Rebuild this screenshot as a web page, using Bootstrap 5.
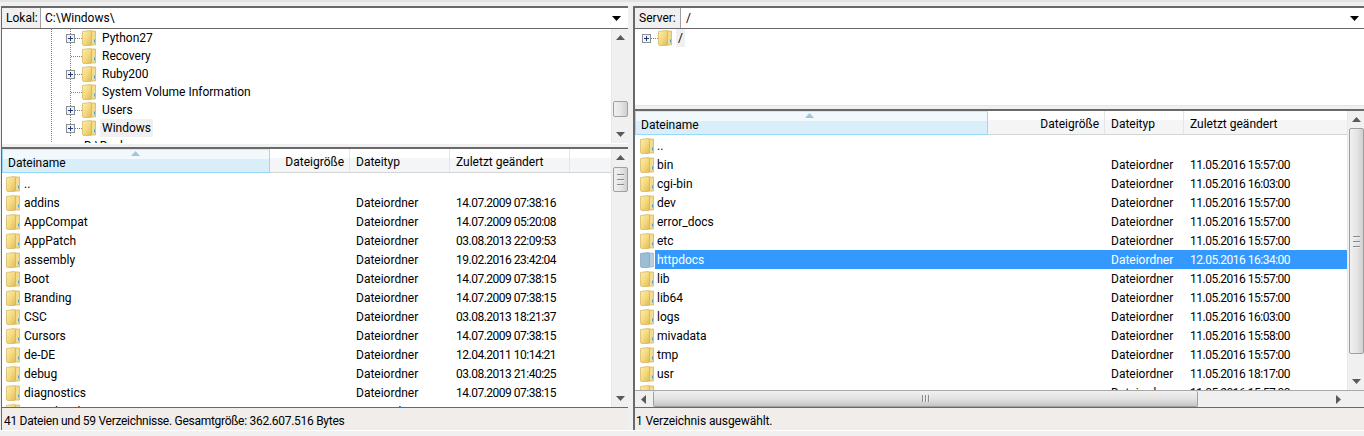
<!DOCTYPE html>
<html lang="de">
<head>
<meta charset="utf-8">
<title>FileZilla</title>
<link href="https://cdn.jsdelivr.net/npm/bootstrap@5.3.0/dist/css/bootstrap.min.css" rel="stylesheet">
<style>
html,body{height:436px;overflow:hidden;margin:0}
body{background:#f0f0f0;font:12px/19px Roboto,"Noto Sans",sans-serif;color:#000;border-top:2px solid #e2e2e2}
.defs-hold{width:0;height:0;overflow:hidden;display:block}
.shell{padding-top:4px;height:429px;border-bottom:1px solid #fff}
.pane-l{width:627px;margin-left:1px;flex:none;border-left:1px solid #696969}
.pane-r{flex:1 1 auto;min-width:0;margin-left:5px;border-left:2px solid #696969}
.addr{border-top:2px solid #696969;border-bottom:1px solid #696969;height:23px;background:#fff;line-height:20px}
.addr-lab{background:#f0f0f0;padding:0 0 0 4px;border-right:1px solid #a0a0a0}
.pane-l .addr-lab{width:39px}
.pane-r .addr-lab{width:46px}
.addr-val{padding-left:4px;flex:1 1 auto}
.pane-r .addr-val{padding-left:5px}
.caret-box{width:16px;flex:none}
.pane-r .caret-box{width:14px}
.ic{display:block;flex:none}
.tree-l{height:114px}
.tree-r{height:76px}
.tree-body{flex:1 1 auto;min-width:0;overflow:hidden;background:#fff}
.tree-r.tree-body{flex:none}
.trow{height:18px;line-height:19px}
.tlab{padding:0 2px;height:18px}
.tsel{background:#f0f0f0}
.split-l{height:6px;border-top:1px solid #fff;background:#f0f0f0}
.split-r{height:6px;border-top:1px solid #e4e4e4;background:#f0f0f0}
.lst{border-top:2px solid #696969;background:#fff}
.lst-l{height:260px}
.lst-r{height:298px}
.lst-main{flex:1 1 auto;min-width:0;overflow:hidden;background:#fff}
.hd{height:24px;line-height:27px;background:linear-gradient(#fff 0,#fff 38%,#f3f5f7 40%,#f3f5f7 100%);border-bottom:1px solid #d5d5d5;margin-bottom:1px}
.hc{border-right:1px solid #e3e5e7;padding:0 6px;height:23px;flex:none}
.hc-on{background:linear-gradient(#f2f9fd 0,#f2f9fd 40%,#daeefa 42%,#daeefa 100%);border:1px solid #96d9f9;border-top-color:#cbe8f8;height:24px;position:relative;padding:0 5px;line-height:26px}
.sortmark{position:absolute;left:128px;top:1px}
.pane-r .sortmark{left:169px}
.hc-fill{flex:1 1 auto;border-right:0}
.lrow{height:19px;line-height:19px;white-space:nowrap}
.lst-l .c1{width:268px}
.lst-l .c2{width:80px}
.lst-l .c3{width:100px}
.lst-l .c4{width:120px}
.lst-r .c1{width:353px}
.lst-r .c2{width:117px}
.lst-r .c3{width:79px}
.lst-r .c4{width:120px}
.ta{text-align:right;padding-right:5px}
.cell{flex:none;padding:1px 6px 0;overflow:hidden}
.cell.c4{letter-spacing:-.5px}
.cname{flex:none;display:flex;align-items:center;padding-left:4px;overflow:hidden}
.cname span{padding-top:2px}
.cname .ic{margin-right:4px}
.lst-r .cname{padding-left:5px}
.lst-r .cname .ic{margin-right:3px}
.rsel .cname span{background:#39f;color:#fff;padding-left:2px;margin-left:-2px;flex:1 1 auto}
.rsel .cell{background:#39f;color:#fff}
.rsel .cfill{background:#39f;flex:1 1 auto}
.status{border-top:1px solid #696969;height:23px;line-height:26px;padding-left:2px;background:#f0edeb;white-space:nowrap;letter-spacing:-.28px}
.pane-r .status{padding-left:1px;letter-spacing:-.1px}
.vbar{width:17px;flex:none;background:#f0f0f0;border-left:1px solid #e8e8e8}
.arrow-cell{height:17px;flex:none}
.thumb{width:15px;flex:none;border:1px solid #a0a0a0;border-radius:2px;background:linear-gradient(90deg,#f1f1f1,#e6e6e6 50%,#cfcfcf)}
.grip{width:7px;height:1px;background:#8a8a8a;box-shadow:0 1px 0 #eee}
.t-tree{height:16px;margin-top:55px}
.t-lst{height:25px;margin-top:1px}
.t-rv{height:226px}
.vfill{flex:1 1 auto}
.hbar{height:17px;border-top:1px solid #a9a9a9;background:#f0f0f0;flex:none}
.hbar .arrow-cell{width:17px;height:16px}
.h-thumb{width:545px;flex:none;height:16px;border:1px solid #a0a0a0;border-top:0;border-radius:2px;background:linear-gradient(#f1f1f1,#e3e3e3 50%,#c6c6c6);margin-left:1px;gap:2px}
.vgrip{width:1px;height:7px;background:#8a8a8a;box-shadow:1px 0 0 #eee}
.hfill{flex:1 1 auto}
.corner{width:17px;flex:none}
.lst-r .lrows{height:254px;overflow:hidden}
.lst-l .lrows{height:233px;overflow:hidden}
.lst-col{min-height:0;min-width:0}
.lst-top{min-height:0}
</style>
</head>
<body>
<svg class="defs-hold" aria-hidden="true">
<defs>
<linearGradient id="fa" x1="0" y1="0" x2="1" y2="1"><stop offset="0" stop-color="#fbeeb0"/><stop offset=".5" stop-color="#f4da80"/><stop offset="1" stop-color="#e0ba58"/></linearGradient>
<symbol id="fld" viewBox="0 0 14 16">
<path d="M9 1 H13.5 V15 H9Z" fill="#f3dc8e" stroke="#cfae55" stroke-width=".7"/>
<path d="M.5 1.5 L8 .5 Q9.5 .5 9.5 2 V14 Q9.5 15.5 8 15.5 H2 Q.5 15.5 .5 14Z" fill="url(#fa)" stroke="#d4b158" stroke-width=".7"/>
<path d="M12 9.5 h1 v3 h-1z" fill="#4aa3d8"/>
</symbol>
<symbol id="fldsel" viewBox="0 0 14 16">
<path d="M9 1 H13.5 V15 H9Z" fill="#b5cfe0" stroke="#8badc4" stroke-width=".6"/>
<path d="M.5 1.5 L8 .5 Q9.5 .5 9.5 2 V14 Q9.5 15.5 8 15.5 H2 Q.5 15.5 .5 14Z" fill="#9dbdd3" stroke="#7fa2ba" stroke-width=".7"/>
</symbol>
<symbol id="exp" viewBox="0 0 9 9">
<rect x=".5" y=".5" width="8" height="8" fill="#f4f4f4" stroke="#8e8f8f"/>
<path d="M2 4.5 H7 M4.5 2 V7" stroke="#1f3a7a" fill="none"/>
</symbol>
<symbol id="up" viewBox="0 0 9 5"><path d="M4.5 0 L9 5 H0Z" fill="#5a5a5a"/></symbol>
<symbol id="down" viewBox="0 0 9 5"><path d="M0 0 H9 L4.5 5Z" fill="#5a5a5a"/></symbol>
<symbol id="left" viewBox="0 0 5 9"><path d="M5 0 V9 L0 4.5Z" fill="#5a5a5a"/></symbol>
<symbol id="right" viewBox="0 0 5 9"><path d="M0 0 V9 L5 4.5Z" fill="#5a5a5a"/></symbol>
<symbol id="sortup" viewBox="0 0 9 5"><path d="M4.5 0 L9 5 H0Z" fill="#a3c6dc"/></symbol>
<symbol id="combo" viewBox="0 0 9 5"><path d="M0 0 H9 L4.5 5Z" fill="#000"/></symbol>
<symbol id="ln1" viewBox="0 0 100 18"><path d="M49.5 0 V18 M68.5 0 V18 M73 9.5 H80" stroke="#808080" stroke-dasharray="1 1" fill="none"/></symbol>
<symbol id="ln2" viewBox="0 0 100 18"><path d="M49.5 0 V18 M68.5 0 V18 M69 9.5 H80" stroke="#808080" stroke-dasharray="1 1" fill="none"/></symbol>
</defs>
</svg>

<div class="shell d-flex">
  <section class="pane-l d-flex flex-column">
    <div class="addr d-flex align-items-stretch">
      <div class="addr-lab">Lokal:</div>
      <div class="addr-val">C:\Windows\</div>
      <div class="caret-box d-flex align-items-center"><svg class="ic" width="9" height="5"><use href="#combo"/></svg></div>
    </div>
    <div class="tree-l d-flex">
      <div class="tree-body">
        <div class="trow d-flex"><svg class="ic" width="80" height="18" viewBox="0 0 80 18"><use href="#ln1" width="100" height="18"/><use href="#exp" x="64" y="5" width="9" height="9"/></svg><svg class="ic" width="14" height="18" viewBox="0 0 14 18"><use href="#fld" y="1" width="14" height="16"/></svg><span class="tlab ms-1">Python27</span></div>
        <div class="trow d-flex"><svg class="ic" width="80" height="18" viewBox="0 0 80 18"><use href="#ln2" width="100" height="18"/></svg><svg class="ic" width="14" height="18" viewBox="0 0 14 18"><use href="#fld" y="1" width="14" height="16"/></svg><span class="tlab ms-1">Recovery</span></div>
        <div class="trow d-flex"><svg class="ic" width="80" height="18" viewBox="0 0 80 18"><use href="#ln1" width="100" height="18"/><use href="#exp" x="64" y="5" width="9" height="9"/></svg><svg class="ic" width="14" height="18" viewBox="0 0 14 18"><use href="#fld" y="1" width="14" height="16"/></svg><span class="tlab ms-1">Ruby200</span></div>
        <div class="trow d-flex"><svg class="ic" width="80" height="18" viewBox="0 0 80 18"><use href="#ln2" width="100" height="18"/></svg><svg class="ic" width="14" height="18" viewBox="0 0 14 18"><use href="#fld" y="1" width="14" height="16"/></svg><span class="tlab ms-1">System Volume Information</span></div>
        <div class="trow d-flex"><svg class="ic" width="80" height="18" viewBox="0 0 80 18"><use href="#ln1" width="100" height="18"/><use href="#exp" x="64" y="5" width="9" height="9"/></svg><svg class="ic" width="14" height="18" viewBox="0 0 14 18"><use href="#fld" y="1" width="14" height="16"/></svg><span class="tlab ms-1">Users</span></div>
        <div class="trow d-flex"><svg class="ic" width="80" height="18" viewBox="0 0 80 18"><use href="#ln1" width="100" height="18"/><use href="#exp" x="64" y="5" width="9" height="9"/></svg><svg class="ic" width="14" height="18" viewBox="0 0 14 18"><use href="#fld" y="1" width="14" height="16"/></svg><span class="tlab tsel ms-1">Windows</span></div>
        <div class="trow d-flex"><svg class="ic" width="80" height="18" viewBox="0 0 80 18"><path d="M49.5 0 V18" stroke="#808080" stroke-dasharray="1 1"/></svg><span class="tlab">D:\Backup</span></div>
      </div>
      <div class="vbar d-flex flex-column align-items-center">
        <div class="arrow-cell d-flex align-items-center"><svg class="ic" width="9" height="5"><use href="#up"/></svg></div>
        <div class="thumb t-tree"></div>
        <div class="vfill"></div>
        <div class="arrow-cell d-flex align-items-center"><svg class="ic" width="9" height="5"><use href="#down"/></svg></div>
      </div>
    </div>
    <div class="split-l"></div>
    <div class="lst lst-l d-flex">
      <div class="lst-main">
        <div class="hd d-flex">
          <div class="hc hc-on c1">Dateiname<svg class="sortmark" width="9" height="5"><use href="#sortup"/></svg></div>
          <div class="hc c2 ta">Dateigröße</div>
          <div class="hc c3">Dateityp</div>
          <div class="hc c4">Zuletzt geändert</div>
          <div class="hc hc-fill"></div>
        </div>
        <div class="lrows">
          <div class="lrow d-flex"><div class="cname c1"><svg class="ic" width="14" height="16"><use href="#fld"/></svg><span>..</span></div></div>
          <div class="lrow d-flex"><div class="cname c1"><svg class="ic" width="14" height="16"><use href="#fld"/></svg><span>addins</span></div><div class="cell c2"></div><div class="cell c3">Dateiordner</div><div class="cell c4">14.07.2009 07:38:16</div></div>
          <div class="lrow d-flex"><div class="cname c1"><svg class="ic" width="14" height="16"><use href="#fld"/></svg><span>AppCompat</span></div><div class="cell c2"></div><div class="cell c3">Dateiordner</div><div class="cell c4">14.07.2009 05:20:08</div></div>
          <div class="lrow d-flex"><div class="cname c1"><svg class="ic" width="14" height="16"><use href="#fld"/></svg><span>AppPatch</span></div><div class="cell c2"></div><div class="cell c3">Dateiordner</div><div class="cell c4">03.08.2013 22:09:53</div></div>
          <div class="lrow d-flex"><div class="cname c1"><svg class="ic" width="14" height="16"><use href="#fld"/></svg><span>assembly</span></div><div class="cell c2"></div><div class="cell c3">Dateiordner</div><div class="cell c4">19.02.2016 23:42:04</div></div>
          <div class="lrow d-flex"><div class="cname c1"><svg class="ic" width="14" height="16"><use href="#fld"/></svg><span>Boot</span></div><div class="cell c2"></div><div class="cell c3">Dateiordner</div><div class="cell c4">14.07.2009 07:38:15</div></div>
          <div class="lrow d-flex"><div class="cname c1"><svg class="ic" width="14" height="16"><use href="#fld"/></svg><span>Branding</span></div><div class="cell c2"></div><div class="cell c3">Dateiordner</div><div class="cell c4">14.07.2009 07:38:15</div></div>
          <div class="lrow d-flex"><div class="cname c1"><svg class="ic" width="14" height="16"><use href="#fld"/></svg><span>CSC</span></div><div class="cell c2"></div><div class="cell c3">Dateiordner</div><div class="cell c4">03.08.2013 18:21:37</div></div>
          <div class="lrow d-flex"><div class="cname c1"><svg class="ic" width="14" height="16"><use href="#fld"/></svg><span>Cursors</span></div><div class="cell c2"></div><div class="cell c3">Dateiordner</div><div class="cell c4">14.07.2009 07:38:15</div></div>
          <div class="lrow d-flex"><div class="cname c1"><svg class="ic" width="14" height="16"><use href="#fld"/></svg><span>de-DE</span></div><div class="cell c2"></div><div class="cell c3">Dateiordner</div><div class="cell c4">12.04.2011 10:14:21</div></div>
          <div class="lrow d-flex"><div class="cname c1"><svg class="ic" width="14" height="16"><use href="#fld"/></svg><span>debug</span></div><div class="cell c2"></div><div class="cell c3">Dateiordner</div><div class="cell c4">03.08.2013 21:40:25</div></div>
          <div class="lrow d-flex"><div class="cname c1"><svg class="ic" width="14" height="16"><use href="#fld"/></svg><span>diagnostics</span></div><div class="cell c2"></div><div class="cell c3">Dateiordner</div><div class="cell c4">14.07.2009 07:38:15</div></div>
          <div class="lrow d-flex"><div class="cname c1"><svg class="ic" width="14" height="16"><use href="#fld"/></svg><span>DigitalLocker</span></div><div class="cell c2"></div><div class="cell c3">Dateiordner</div><div class="cell c4">12.04.2011 10:14:21</div></div>
        </div>
      </div>
      <div class="vbar d-flex flex-column align-items-center">
        <div class="arrow-cell d-flex align-items-center"><svg class="ic" width="9" height="5"><use href="#up"/></svg></div>
        <div class="thumb t-lst d-flex flex-column align-items-center justify-content-center gap-1"><div class="grip"></div><div class="grip"></div><div class="grip"></div></div>
        <div class="vfill"></div>
        <div class="arrow-cell d-flex align-items-center"><svg class="ic" width="9" height="5"><use href="#down"/></svg></div>
      </div>
    </div>
    <div class="status">41 Dateien und 59 Verzeichnisse. Gesamtgröße: 362.607.516 Bytes</div>
  </section>

  <section class="pane-r d-flex flex-column">
    <div class="addr d-flex align-items-stretch">
      <div class="addr-lab">Server:</div>
      <div class="addr-val">/</div>
      <div class="caret-box d-flex align-items-center"><svg class="ic" width="9" height="5"><use href="#combo"/></svg></div>
    </div>
    <div class="tree-r tree-body">
      <div class="trow d-flex"><svg class="ic" width="23" height="18" viewBox="0 0 23 18"><path d="M16 9.5 H23" stroke="#808080" stroke-dasharray="1 1"/><use href="#exp" x="7" y="5" width="9" height="9"/></svg><svg class="ic" width="14" height="18" viewBox="0 0 14 18"><use href="#fld" y="1" width="14" height="16"/></svg><span class="tlab tsel ms-1">/</span></div>
    </div>
    <div class="split-r"></div>
    <div class="lst lst-r d-flex">
      <div class="lst-col flex-grow-1 d-flex flex-column">
        <div class="lst-top d-flex flex-grow-1">
          <div class="lst-main">
            <div class="hd d-flex">
              <div class="hc hc-on c1">Dateiname<svg class="sortmark" width="9" height="5"><use href="#sortup"/></svg></div>
              <div class="hc c2 ta">Dateigröße</div>
              <div class="hc c3">Dateityp</div>
              <div class="hc c4 border-0">Zuletzt geändert</div>
            </div>
            <div class="lrows">
              <div class="lrow d-flex"><div class="cname c1"><svg class="ic" width="14" height="16"><use href="#fld"/></svg><span>..</span></div></div>
              <div class="lrow d-flex"><div class="cname c1"><svg class="ic" width="14" height="16"><use href="#fld"/></svg><span>bin</span></div><div class="cell c2"></div><div class="cell c3">Dateiordner</div><div class="cell c4">11.05.2016 15:57:00</div></div>
              <div class="lrow d-flex"><div class="cname c1"><svg class="ic" width="14" height="16"><use href="#fld"/></svg><span>cgi-bin</span></div><div class="cell c2"></div><div class="cell c3">Dateiordner</div><div class="cell c4">11.05.2016 16:03:00</div></div>
              <div class="lrow d-flex"><div class="cname c1"><svg class="ic" width="14" height="16"><use href="#fld"/></svg><span>dev</span></div><div class="cell c2"></div><div class="cell c3">Dateiordner</div><div class="cell c4">11.05.2016 15:57:00</div></div>
              <div class="lrow d-flex"><div class="cname c1"><svg class="ic" width="14" height="16"><use href="#fld"/></svg><span>error_docs</span></div><div class="cell c2"></div><div class="cell c3">Dateiordner</div><div class="cell c4">11.05.2016 15:57:00</div></div>
              <div class="lrow d-flex"><div class="cname c1"><svg class="ic" width="14" height="16"><use href="#fld"/></svg><span>etc</span></div><div class="cell c2"></div><div class="cell c3">Dateiordner</div><div class="cell c4">11.05.2016 15:57:00</div></div>
              <div class="lrow rsel d-flex"><div class="cname c1"><svg class="ic" width="14" height="16"><use href="#fldsel"/></svg><span>httpdocs</span></div><div class="cell c2"></div><div class="cell c3">Dateiordner</div><div class="cell c4">12.05.2016 16:34:00</div><div class="cfill"></div></div>
              <div class="lrow d-flex"><div class="cname c1"><svg class="ic" width="14" height="16"><use href="#fld"/></svg><span>lib</span></div><div class="cell c2"></div><div class="cell c3">Dateiordner</div><div class="cell c4">11.05.2016 15:57:00</div></div>
              <div class="lrow d-flex"><div class="cname c1"><svg class="ic" width="14" height="16"><use href="#fld"/></svg><span>lib64</span></div><div class="cell c2"></div><div class="cell c3">Dateiordner</div><div class="cell c4">11.05.2016 15:57:00</div></div>
              <div class="lrow d-flex"><div class="cname c1"><svg class="ic" width="14" height="16"><use href="#fld"/></svg><span>logs</span></div><div class="cell c2"></div><div class="cell c3">Dateiordner</div><div class="cell c4">11.05.2016 16:03:00</div></div>
              <div class="lrow d-flex"><div class="cname c1"><svg class="ic" width="14" height="16"><use href="#fld"/></svg><span>mivadata</span></div><div class="cell c2"></div><div class="cell c3">Dateiordner</div><div class="cell c4">11.05.2016 15:58:00</div></div>
              <div class="lrow d-flex"><div class="cname c1"><svg class="ic" width="14" height="16"><use href="#fld"/></svg><span>tmp</span></div><div class="cell c2"></div><div class="cell c3">Dateiordner</div><div class="cell c4">11.05.2016 15:57:00</div></div>
              <div class="lrow d-flex"><div class="cname c1"><svg class="ic" width="14" height="16"><use href="#fld"/></svg><span>usr</span></div><div class="cell c2"></div><div class="cell c3">Dateiordner</div><div class="cell c4">11.05.2016 18:17:00</div></div>
              <div class="lrow d-flex"><div class="cname c1"><svg class="ic" width="14" height="16"><use href="#fld"/></svg><span>var</span></div><div class="cell c2"></div><div class="cell c3">Dateiordner</div><div class="cell c4">11.05.2016 15:57:00</div></div>
            </div>
          </div>
          <div class="vbar d-flex flex-column align-items-center">
            <div class="arrow-cell d-flex align-items-center"><svg class="ic" width="9" height="5"><use href="#up"/></svg></div>
            <div class="thumb t-rv d-flex flex-column align-items-center justify-content-center gap-1"><div class="grip"></div><div class="grip"></div><div class="grip"></div></div>
            <div class="vfill"></div>
            <div class="arrow-cell d-flex align-items-center"><svg class="ic" width="9" height="5"><use href="#down"/></svg></div>
          </div>
        </div>
        <div class="hbar d-flex align-items-stretch">
          <div class="arrow-cell d-flex align-items-center justify-content-center"><svg class="ic" width="5" height="9"><use href="#left"/></svg></div>
          <div class="h-thumb d-flex align-items-center justify-content-center"><div class="vgrip"></div><div class="vgrip"></div><div class="vgrip"></div></div>
          <div class="hfill"></div>
          <div class="arrow-cell d-flex align-items-center justify-content-center"><svg class="ic" width="5" height="9"><use href="#right"/></svg></div>
          <div class="corner"></div>
        </div>
      </div>
    </div>
    <div class="status">1 Verzeichnis ausgewählt.</div>
  </section>
</div>
<script src="https://cdn.jsdelivr.net/npm/bootstrap@5.3.0/dist/js/bootstrap.bundle.min.js"></script>
</body>
</html>
